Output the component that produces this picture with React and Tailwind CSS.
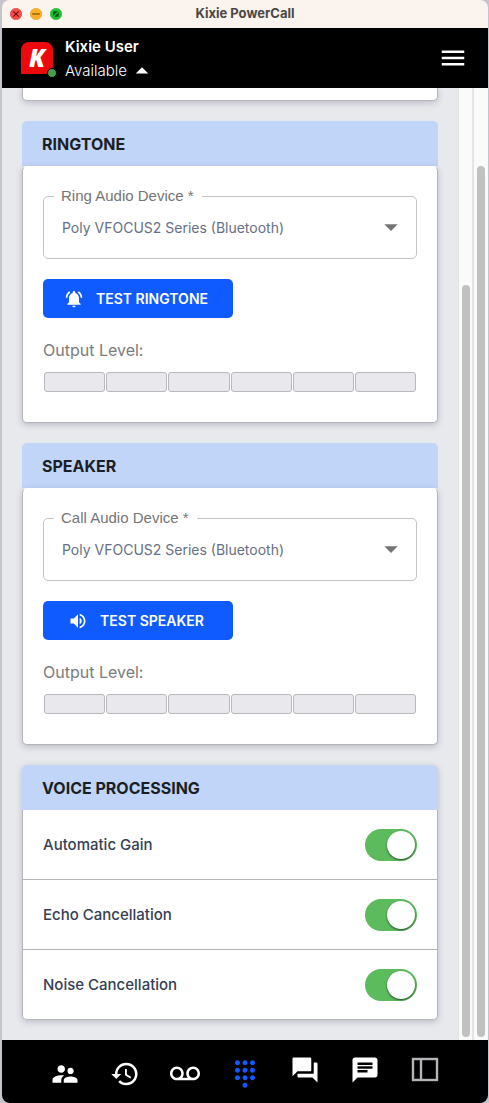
import React, { useState } from "react";
import {
  MdArrowDropDown,
  MdArrowDropUp,
  MdChat,
  MdDialpad,
  MdForum,
  MdHistory,
  MdMenu,
  MdNotificationsActive,
  MdSupervisorAccount,
  MdVoicemail,
  MdVolumeUp,
} from "react-icons/md";

const audioSections = [
  {
    id: "ringtone",
    title: "Ringtone",
    label: "Ring Audio Device",
    button: "Test Ringtone",
    icon: MdNotificationsActive,
  },
  {
    id: "speaker",
    title: "Speaker",
    label: "Call Audio Device",
    button: "Test Speaker",
    icon: MdVolumeUp,
  },
];

const voiceOptions = ["Automatic Gain", "Echo Cancellation", "Noise Cancellation"];

const PanelIcon = () => (
  <svg width="30" height="30" viewBox="0 0 30 30" fill="none" stroke="#b4b4ba" strokeWidth="2.4">
    <rect x="3" y="4" width="24" height="21" />
    <path d="M11 4v21" />
  </svg>
);

const TitleBar = () => (
  <div className="grid h-7 grid-cols-[1fr_auto_1fr] items-center rounded-t-lg bg-[#fbf3ee] px-2">
    <div className="flex gap-2">
      <button aria-label="Close window">
        <svg width="12" height="12" viewBox="0 0 12 12">
          <circle cx="6" cy="6" r="5.75" fill="#fb4b48" stroke="#d8383a" strokeWidth=".5" />
          <path d="M3.3 3.3l5.4 5.4M8.7 3.3L3.3 8.7" stroke="#6d0b0c" strokeWidth="1.1" />
        </svg>
      </button>
      <button aria-label="Minimize window">
        <svg width="12" height="12" viewBox="0 0 12 12">
          <circle cx="6" cy="6" r="5.75" fill="#fdb024" stroke="#dc951a" strokeWidth=".5" />
          <path d="M2.2 6h7.6" stroke="#8f5a0b" strokeWidth="1.4" />
        </svg>
      </button>
      <button aria-label="Zoom window">
        <svg width="12" height="12" viewBox="0 0 12 12">
          <circle cx="6" cy="6" r="5.75" fill="#1fc233" stroke="#18a52a" strokeWidth=".5" />
          <path d="M3.2 7.9V3.2h4.7zM8.8 4.1v4.7H4.1z" fill="#0a5a14" />
        </svg>
      </button>
    </div>
    <h1 className="text-[13px] font-bold text-[#4b4745]">Kixie PowerCall</h1>
  </div>
);

const Header = () => (
  <header className="flex h-15 items-center justify-between bg-black pr-5 pl-[19px] text-white">
    <div className="flex items-center gap-3">
      <div className="relative flex h-8 w-8 items-center justify-center rounded-lg rounded-bl-none bg-[#ee0a0c]">
        <span className="font-['Open_Sans',sans-serif] text-2xl font-extrabold italic leading-none">
          K
        </span>
        <span className="absolute -bottom-1 -right-1 h-[10px] w-[10px] rounded-full border border-black bg-[#43a047]" />
      </div>
      <div className="pt-[2px]">
        <p className="text-[15px] leading-6 font-semibold">Kixie User</p>
        <button className="flex h-6 items-center text-[15px] font-light">
          Available
          <MdArrowDropUp size={30} />
        </button>
      </div>
    </div>
    <button aria-label="Menu">
      <MdMenu size={30} />
    </button>
  </header>
);

const SectionTitle = ({ children }) => (
  <h2 className="flex h-[45px] items-center rounded-t-[5px] bg-[#c1d5f8] px-5 text-base font-bold uppercase text-[#1b1f25]">
    {children}
  </h2>
);

const AudioSection = ({ section }) => {
  const Icon = section.icon;

  return (
    <section>
      <SectionTitle>{section.title}</SectionTitle>
      <div className="rounded-[5px] border border-[#b5b4bb] border-t-white bg-white px-5 pt-[29px] pb-[30px] shadow-[0_2px_6px_rgba(60,60,90,0.25)]">
        <div className="relative">
          <label
            htmlFor={section.id}
            className="absolute -top-3 left-[11px] bg-white pl-[7px] pr-2 font-['Liberation_Sans',sans-serif] text-[15px] leading-6 text-[#757575]"
          >
            {section.label} *
          </label>
          <select
            id={section.id}
            className="h-[63px] w-full appearance-none rounded-[5px] border border-[#c4c4c4] bg-transparent pl-[18px] pr-12 text-sm text-[#667085]"
          >
            <option>Poly VFOCUS2 Series (Bluetooth)</option>
          </select>
          <MdArrowDropDown
            size={32}
            className="pointer-events-none absolute right-[10px] top-[15px] text-[#757575]"
          />
        </div>

        <button className="mt-5 flex h-[39px] w-[190px] items-center justify-center gap-3 rounded-[5px] bg-[#0f5bff] pr-1 text-sm font-semibold uppercase text-white">
          <Icon size={20} />
          {section.button}
        </button>

        <p className="mt-5 text-base text-[#7b7b7b]">Output Level:</p>
        <div className="mt-[10px] grid grid-cols-6 gap-px px-px">
          {Array.from({ length: 6 }, (_, i) => (
            <div key={i} className="h-5 rounded-[3px] border border-[#b8b7bb] bg-[#e9e9ed]" />
          ))}
        </div>
      </div>
    </section>
  );
};

const VoiceRow = ({ name }) => {
  const [enabled, setEnabled] = useState(true);

  return (
    <label className="flex items-center justify-between px-5 text-[15px] leading-6 font-medium text-[#344054]">
      {name}
      <input
        type="checkbox"
        checked={enabled}
        onChange={() => setEnabled(!enabled)}
        className="mt-[19px] mb-[18px] flex h-8 w-[52px] appearance-none items-center rounded-full bg-gray-300 p-[2px] before:h-7 before:w-7 before:rounded-full before:bg-white before:shadow-[0_1px_2px_rgba(0,0,0,0.6)] before:content-[''] checked:justify-end checked:bg-[#5cbb5c]"
      />
    </label>
  );
};

const Footer = () => (
  <footer className="flex h-[63px] items-center justify-center gap-[30px] rounded-b-lg bg-black text-white">
    <nav className="flex gap-[30px] pt-1">
      <button aria-label="Contacts">
        <MdSupervisorAccount size={30} />
      </button>
      <button aria-label="History">
        <MdHistory size={30} />
      </button>
      <button aria-label="Voicemail">
        <MdVoicemail size={30} />
      </button>
      <button aria-label="Dialpad" className="text-[#0f5bff]">
        <MdDialpad size={30} />
      </button>
    </nav>
    <nav className="flex gap-[30px] pb-1">
      <button aria-label="Conversations">
        <MdForum size={30} />
      </button>
      <button aria-label="Messages">
        <MdChat size={30} />
      </button>
      <button aria-label="Side panel">
        <PanelIcon />
      </button>
    </nav>
  </footer>
);

const App = () => {
  return (
    <div className="min-h-screen bg-[#c3c4cc] pl-[2px] pr-px font-['Inter',sans-serif]">
      <div className="flex min-h-screen flex-col">
        <TitleBar />
        <Header />

        <div className="flex flex-1 bg-[#e8e9ed]">
          <main className="flex flex-1 flex-col gap-5 px-5 pb-5">
            {/* tail of the section scrolled above */}
            <div className="h-[13px] rounded-b-[5px] border border-t-0 border-[#b5b4bb] bg-white shadow-[0_2px_6px_rgba(60,60,90,0.25)]" />

            {audioSections.map((section) => (
              <AudioSection key={section.id} section={section} />
            ))}

            <section className="rounded-[5px] shadow-[0_2px_6px_rgba(60,60,90,0.25)]">
              <SectionTitle>Voice Processing</SectionTitle>
              <div className="divide-y divide-[#b5b4bb] rounded-b-[5px] border border-t-0 border-[#b5b4bb] bg-white">
                {voiceOptions.map((name) => (
                  <VoiceRow key={name} name={name} />
                ))}
              </div>
            </section>
          </main>

          {/* scroll bars of the inner pane and of the window */}
          <div className="flex w-[14px] flex-col border-l border-[#e2e2e2] bg-[#fafafa] px-[3px] pt-[197px] pb-[3px]">
            <div className="w-2 flex-1 rounded-full bg-[#c1c1c1]" />
          </div>
          <div className="flex w-4 flex-col border-l-2 border-[#e4e4e6] bg-[#fafafa] px-[3px] pt-[78px] pb-[3px]">
            <div className="w-2 flex-1 rounded-full bg-[#c1c1c1]" />
          </div>
        </div>

        <Footer />
      </div>
    </div>
  );
};

export default App;
